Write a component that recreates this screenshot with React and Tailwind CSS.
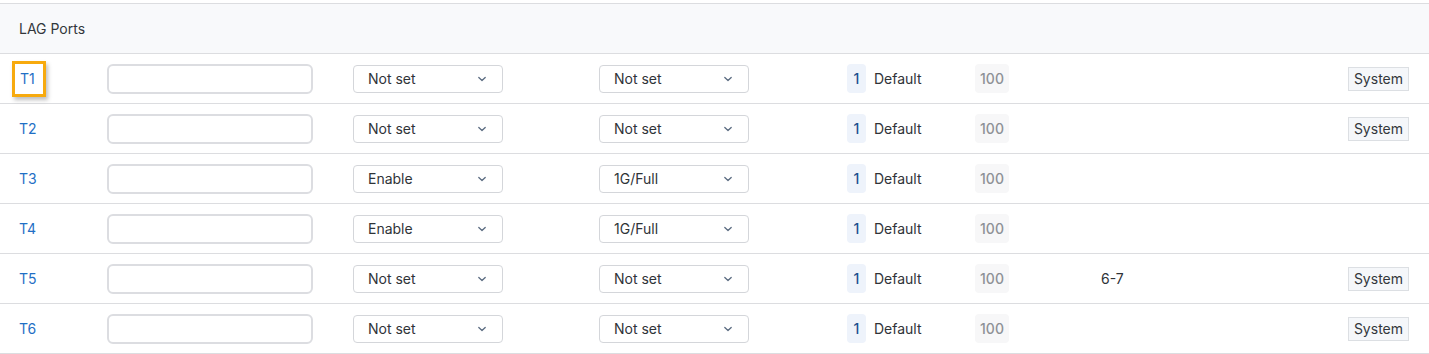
import React from 'react';

const rows = [
  { id: 'T1', state: 'Not set', speed: 'Not set', lag: '', system: true, focus: true },
  { id: 'T2', state: 'Not set', speed: 'Not set', lag: '', system: true },
  { id: 'T3', state: 'Enable', speed: '1G/Full', lag: '', system: false },
  { id: 'T4', state: 'Enable', speed: '1G/Full', lag: '', system: false },
  { id: 'T5', state: 'Not set', speed: 'Not set', lag: '6-7', system: true },
  { id: 'T6', state: 'Not set', speed: 'Not set', lag: '', system: true },
];

const Chevron = () => (
  <svg width="10" height="10" viewBox="0 0 10 10" fill="none" className="text-[#5a6b80]">
    <path d="M1.8 3.5 L5 6.5 L8.2 3.5" stroke="currentColor" strokeWidth="1.3" strokeLinecap="round" strokeLinejoin="round" />
  </svg>
);

const Select = ({ value }) => (
  <div className="w-[150px] h-[28px] border border-[#d4d6da] rounded-[4px] bg-white flex items-center justify-between pl-[14px] pr-[15px] text-[#2f3338]">
    <span>{value}</span>
    <Chevron />
  </div>
);

export default function App() {
  return (
    <div className="w-[1429px] h-[354px] bg-white pt-[3px] text-[14px] text-[#2f3338]" style={{ fontFamily: 'Inter, "Noto Sans", sans-serif' }}>
      <div className="border-t border-[#dcdde0]">
        <div className="h-[50px] bg-[#f8f9fb] border-b border-[#dcdde0] flex items-center pl-[19px] text-[14px] text-[#33373c]">
          LAG Ports
        </div>
        {rows.map((r) => (
          <div key={r.id} className="h-[50px] border-b border-[#dcdde0] flex items-center pl-[19px] pr-[20px]">
            <div className="w-[88px] flex items-center">
              {r.focus ? (
                <span className="-ml-[7px] w-[34px] pl-[5px] h-[36px] flex items-center border-[3px] border-[#f7aa0e] shadow-[2px_3px_4px_rgba(0,0,0,0.25)] text-[#1f6fc5]">
                  {r.id}
                </span>
              ) : (
                <span className="text-[#1f6fc5]">{r.id}</span>
              )}
            </div>
            <div className="w-[246px]">
              <div className="w-[206px] h-[30px] border-2 border-[#dcdde1] rounded-[6px] bg-white" />
            </div>
            <div className="w-[246px]">
              <Select value={r.state} />
            </div>
            <div className="w-[248px]">
              <Select value={r.speed} />
            </div>
            <div className="w-[128px] flex items-center">
              <span className="w-[19px] h-[29px] rounded-[4px] bg-[#eef3fb] flex items-center justify-center text-[#1c4f8f] font-medium">1</span>
              <span className="ml-[8px]">Default</span>
            </div>
            <div className="w-[126px] flex items-center">
              <span className="w-[34px] h-[29px] rounded-[4px] bg-[#f7f7f8] flex items-center justify-center text-[#8e9196] font-medium">100</span>
            </div>
            <div className="flex-1">{r.lag}</div>
            {r.system && (
              <div className="h-[24px] px-[5px] border border-[#dcdfe3] bg-[#f5f7fa] flex items-center text-[#33373c]">
                System
              </div>
            )}
          </div>
        ))}
      </div>
    </div>
  );
}
